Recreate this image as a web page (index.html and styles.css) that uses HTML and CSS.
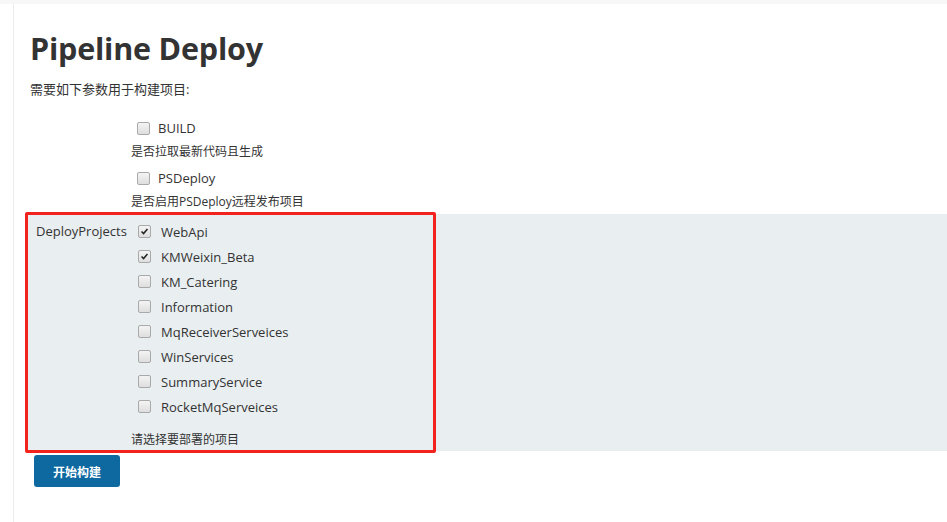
FILE: index.html
```html
<!DOCTYPE html>
<html lang="zh">
<head>
<meta charset="utf-8">
<title>Pipeline Deploy</title>
<link rel="stylesheet" href="styles.css">
</head>
<body>
<div class="topbar"></div>
<main class="page">
  <h1 class="title">Pipeline Deploy</h1>
  <p class="intro">需要如下参数用于构建项目:</p>

  <div class="params">
    <div class="param">
      <div class="param-name"></div>
      <div class="param-value">
        <label class="check-line top"><span class="cb"></span><span class="cb-text">BUILD</span></label>
        <div class="desc">是否拉取最新代码且生成</div>
      </div>
    </div>
    <div class="param">
      <div class="param-name"></div>
      <div class="param-value">
        <label class="check-line top"><span class="cb"></span><span class="cb-text">PSDeploy</span></label>
        <div class="desc">是否启用PSDeploy远程发布项目</div>
      </div>
    </div>

    <div class="param band">
      <div class="param-name">DeployProjects</div>
      <div class="param-value">
        <div class="list">
          <label class="check-line"><span class="cb checked"><svg viewBox="0 0 13 13"><path d="M3 6.6 L5.4 9 L10 3.6" fill="none" stroke="#222" stroke-width="1.8"/></svg></span><span class="cb-text">WebApi</span></label>
          <label class="check-line"><span class="cb checked"><svg viewBox="0 0 13 13"><path d="M3 6.6 L5.4 9 L10 3.6" fill="none" stroke="#222" stroke-width="1.8"/></svg></span><span class="cb-text">KMWeixin_Beta</span></label>
          <label class="check-line"><span class="cb"></span><span class="cb-text">KM_Catering</span></label>
          <label class="check-line"><span class="cb"></span><span class="cb-text">Information</span></label>
          <label class="check-line"><span class="cb"></span><span class="cb-text">MqReceiverServeices</span></label>
          <label class="check-line"><span class="cb"></span><span class="cb-text">WinServices</span></label>
          <label class="check-line"><span class="cb"></span><span class="cb-text">SummaryService</span></label>
          <label class="check-line"><span class="cb"></span><span class="cb-text">RocketMqServeices</span></label>
        </div>
        <div class="desc band-desc">请选择要部署的项目</div>
      </div>
      <div class="highlight"></div>
    </div>
  </div>

  <div class="actions">
    <button class="btn-build" type="button">开始构建</button>
  </div>
</main>
</body>
</html>
```

FILE: styles.css
```css
html, body {
  margin: 0;
  padding: 0;
  background: #ffffff;
}

body {
  font-family: "Open Sans", "Noto Sans CJK SC", sans-serif;
  color: #333333;
  font-size: 13px;
}

.topbar {
  height: 4px;
  background: #f7f7f7;
}

.page {
  margin-left: 13px;
  border-left: 1px solid #ececec;
  min-height: 518px;
  box-sizing: border-box;
  padding-top: 24px;
}

.title {
  margin: 0 0 0 16px;
  font-size: 30.5px;
  line-height: 40px;
  font-weight: 700;
  color: #333333;
  letter-spacing: -0.2px;
}

.intro {
  margin: 11px 0 0 16px;
  font-size: 13px;
  line-height: 20px;
}

.params {
  margin-top: 19px;
  display: flex;
  flex-direction: column;
}

.param {
  display: flex;
  margin-left: 13px;
}

.param + .param {
  margin-top: 6px;
}

.param-name {
  width: 104px;
  flex: none;
  box-sizing: border-box;
  padding-left: 9px;
  line-height: 25px;
  font-size: 13px;
}

.param-value {
  display: flex;
  flex-direction: column;
}

.check-line {
  display: flex;
  align-items: center;
  height: 20px;
  padding-left: 6px;
}

.check-line.top .cb-text {
  margin-left: 8px;
}

.cb {
  width: 11px;
  height: 11px;
  border: 1px solid #a9a9a9;
  border-radius: 2px;
  background: linear-gradient(#f4f4f4, #dedede);
  flex: none;
  display: flex;
  align-items: center;
  justify-content: center;
}

.cb svg {
  width: 11px;
  height: 11px;
  display: block;
}

.cb-text {
  margin-left: 10px;
  font-size: 13px;
}

.desc {
  font-size: 12px;
  line-height: 20px;
  margin-top: 4px;
}

.band {
  position: relative;
  background: #e9eef1;
  padding: 5px 0 1px 0;
  margin-top: 2px !important;
}

.band .check-line {
  height: 25px;
  padding-left: 7px;
}

.band .cb-text {
  margin-left: 10px;
}

.band-desc {
  margin-top: 11px;
}

.highlight {
  position: absolute;
  left: -2px;
  top: -2px;
  width: 405px;
  bottom: -2px;
  border: 3px solid #f2231d;
  border-radius: 2px;
  pointer-events: none;
}

.actions {
  margin: 4px 0 0 20px;
}

.btn-build {
  width: 86px;
  height: 32px;
  border: none;
  border-radius: 3px;
  background: #0e69a1;
  color: #ffffff;
  font-family: "Noto Sans CJK SC", sans-serif;
  font-size: 12px;
  font-weight: 700;
  padding: 0;
  cursor: pointer;
}
```
